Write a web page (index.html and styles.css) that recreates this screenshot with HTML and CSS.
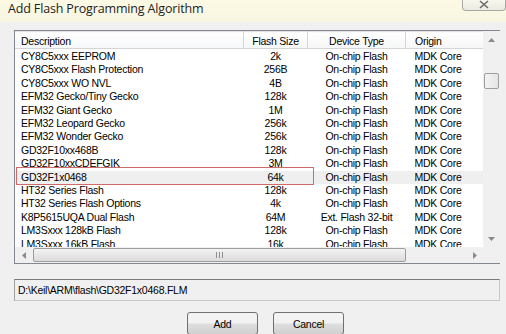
FILE: index.html
```html
<!DOCTYPE html>
<html>
<head>
    <title>Add Flash Programming Algorithm</title>
    <link rel="stylesheet" href="styles.css">
</head>
<body>
    <div class="window">
        <div class="titlebar">
            <span class="title">Add Flash Programming Algorithm</span>
            <div class="close">
                <svg width="12" height="9" viewBox="0 0 12 9"><path d="M2 1 L10 8 M10 1 L2 8" stroke="#6b6b6b" stroke-width="1.6" fill="none"/></svg>
            </div>
        </div>
        <div class="body">
            <div class="listbox">
                <div class="list-area">
                    <table class="algos">
                        <thead>
                            <tr>
                                <th class="c-desc">Description</th>
                                <th class="c-size">Flash Size</th>
                                <th class="c-type">Device Type</th>
                                <th class="c-orig">Origin</th>
                            </tr>
                        </thead>
                        <tbody>
                            <tr><td class="c-desc">CY8C5xxx EEPROM</td><td class="c-size">2k</td><td class="c-type">On-chip Flash</td><td class="c-orig">MDK Core</td></tr>
                            <tr><td class="c-desc">CY8C5xxx Flash Protection</td><td class="c-size">256B</td><td class="c-type">On-chip Flash</td><td class="c-orig">MDK Core</td></tr>
                            <tr><td class="c-desc">CY8C5xxx WO NVL</td><td class="c-size">4B</td><td class="c-type">On-chip Flash</td><td class="c-orig">MDK Core</td></tr>
                            <tr><td class="c-desc">EFM32 Gecko/Tiny Gecko</td><td class="c-size">128k</td><td class="c-type">On-chip Flash</td><td class="c-orig">MDK Core</td></tr>
                            <tr><td class="c-desc">EFM32 Giant Gecko</td><td class="c-size">1M</td><td class="c-type">On-chip Flash</td><td class="c-orig">MDK Core</td></tr>
                            <tr><td class="c-desc">EFM32 Leopard Gecko</td><td class="c-size">256k</td><td class="c-type">On-chip Flash</td><td class="c-orig">MDK Core</td></tr>
                            <tr><td class="c-desc">EFM32 Wonder Gecko</td><td class="c-size">256k</td><td class="c-type">On-chip Flash</td><td class="c-orig">MDK Core</td></tr>
                            <tr><td class="c-desc">GD32F10xx468B</td><td class="c-size">128k</td><td class="c-type">On-chip Flash</td><td class="c-orig">MDK Core</td></tr>
                            <tr><td class="c-desc">GD32F10xxCDEFGIK</td><td class="c-size">3M</td><td class="c-type">On-chip Flash</td><td class="c-orig">MDK Core</td></tr>
                            <tr class="selected"><td class="c-desc">GD32F1x0468</td><td class="c-size">64k</td><td class="c-type">On-chip Flash</td><td class="c-orig">MDK Core</td></tr>
                            <tr><td class="c-desc">HT32 Series Flash</td><td class="c-size">128k</td><td class="c-type">On-chip Flash</td><td class="c-orig">MDK Core</td></tr>
                            <tr><td class="c-desc">HT32 Series Flash Options</td><td class="c-size">4k</td><td class="c-type">On-chip Flash</td><td class="c-orig">MDK Core</td></tr>
                            <tr><td class="c-desc">K8P5615UQA Dual Flash</td><td class="c-size">64M</td><td class="c-type">Ext. Flash 32-bit</td><td class="c-orig">MDK Core</td></tr>
                            <tr><td class="c-desc">LM3Sxxx 128kB Flash</td><td class="c-size">128k</td><td class="c-type">On-chip Flash</td><td class="c-orig">MDK Core</td></tr>
                            <tr><td class="c-desc">LM3Sxxx 16kB Flash</td><td class="c-size">16k</td><td class="c-type">On-chip Flash</td><td class="c-orig">MDK Core</td></tr>
                        </tbody>
                    </table>
                    <!-- red marker drawn over the chosen entry -->
                    <div class="marker"></div>
                </div>
                <div class="vscroll">
                    <div class="sb-btn"><svg width="7" height="4" viewBox="0 0 7 4"><path d="M0 4 L3.5 0 L7 4 Z" fill="#8a8a8a"/></svg></div>
                    <div class="vtrack"><div class="vthumb"></div></div>
                    <div class="sb-btn"><svg width="7" height="4" viewBox="0 0 7 4"><path d="M0 0 L3.5 4 L7 0 Z" fill="#8a8a8a"/></svg></div>
                </div>
                <div class="hscroll">
                    <div class="sb-btn"><svg width="4" height="7" viewBox="0 0 4 7"><path d="M4 0 L0 3.5 L4 7 Z" fill="#8a8a8a"/></svg></div>
                    <div class="htrack">
                        <div class="hthumb">
                            <svg width="7" height="6" viewBox="0 0 7 6"><path d="M0.5 0 V6 M3.5 0 V6 M6.5 0 V6" stroke="#8d8d8d" stroke-width="1"/></svg>
                        </div>
                    </div>
                    <div class="sb-btn"><svg width="4" height="7" viewBox="0 0 4 7"><path d="M0 0 L4 3.5 L0 7 Z" fill="#8a8a8a"/></svg></div>
                </div>
                <div class="corner"></div>
            </div>
            <div class="pathbox">D:\Keil\ARM\flash\GD32F1x0468.FLM</div>
            <div class="buttons">
                <button class="btn">Add</button>
                <button class="btn">Cancel</button>
            </div>
        </div>
    </div>
</body>
</html>
```

FILE: styles.css
```css
body {
    margin: 0;
    background-color: #f0f0f0;
    font-family: "Liberation Sans", Arial, sans-serif;
    font-size: 10.5px;
    letter-spacing: -0.25px;
    color: #000;
}
.window {
    width: 506px;
    height: 334px;
    overflow: hidden;
    background-color: #f0f0f0;
}
.titlebar {
    position: relative;
    height: 22px;
    background: linear-gradient(#fcfae4, #f8f6e2);
}
.title {
    display: block;
    padding: 0 0 0 8px;
    font-family: "Open Sans", "Noto Sans", sans-serif;
    font-size: 12.5px;
    letter-spacing: -0.15px;
    line-height: 17px;
    color: #1e1e1e;
}
.close {
    position: absolute;
    top: -1px;
    left: 462px;
    width: 42px;
    height: 11px;
    border: 1px solid #a9a9a4;
    border-top: none;
    border-radius: 0 0 4px 4px;
    background: linear-gradient(#f9f8ee, #ecebe1);
    display: flex;
    justify-content: center;
    align-items: center;
}
.body {
    padding: 8px 6px 0 14px;
}
.listbox {
    display: grid;
    grid-template-columns: 468px 17px;
    grid-template-rows: 216px 16px;
    border: 1px solid #828790;
    background-color: #fff;
}
.list-area {
    position: relative;
    overflow: hidden;
}
.algos {
    border-collapse: collapse;
    table-layout: fixed;
    width: 468px;
}
.algos th {
    height: 15px;
    padding: 1px 0 0;
    font-weight: normal;
    text-align: center;
    background: linear-gradient(#ffffff, #f6f7f8);
    border-top: 1px solid #e3e3e3;
    border-bottom: 1px solid #d5d5d5;
    border-right: 1px solid #d5d5d5;
}
.algos th.c-desc {
    text-align: left;
    padding-left: 5px;
}
.algos th.c-orig {
    text-align: left;
    padding-left: 8px;
}
.algos td {
    height: 13.4px;
    padding: 0;
    line-height: 13.4px;
    white-space: nowrap;
    overflow: hidden;
}
.algos tbody tr:first-child td {
    padding-top: 1px;
}
.c-desc {
    width: 222px;
    padding-left: 6px !important;
}
.c-size {
    width: 63px;
    text-align: center;
}
.c-type {
    width: 97px;
    text-align: center;
}
.c-orig {
    width: 86px;
    padding-left: 9px !important;
}
.selected td {
    background-color: #efefef;
}
.marker {
    position: absolute;
    left: 1px;
    top: 136px;
    width: 296px;
    height: 16px;
    border: 1px solid #cf6a6a;
}
.vscroll {
    grid-row: 1;
    grid-column: 2;
    display: flex;
    flex-direction: column;
    background-color: #f0f0f0;
}
.sb-btn {
    flex: 0 0 17px;
    display: flex;
    justify-content: center;
    align-items: center;
}
.vtrack {
    flex: 1;
    padding: 25px 1px 0;
}
.vthumb {
    height: 14px;
    border: 1px solid #9d9d9d;
    border-radius: 2px;
    background: linear-gradient(90deg, #f3f3f3, #e6e6e6);
}
.hscroll {
    grid-row: 2;
    grid-column: 1;
    display: flex;
    background-color: #f0f0f0;
}
.htrack {
    flex: 1;
    padding: 1px 60px 1px 1px;
    display: flex;
}
.hthumb {
    flex: 1;
    border: 1px solid #9d9d9d;
    border-radius: 2px;
    background: linear-gradient(#f3f3f3, #dcdcdc);
    display: flex;
    justify-content: center;
    align-items: center;
}
.corner {
    grid-row: 2;
    grid-column: 2;
    background-color: #f0f0f0;
}
.pathbox {
    margin-top: 15px;
    height: 20px;
    padding-left: 3px;
    line-height: 20px;
    border: 1px solid #c8c8c8;
    border-top-color: #7a7a7a;
    border-left-color: #a0a0a0;
    background-color: #f0f0f0;
}
.buttons {
    display: flex;
    gap: 15px;
    margin-top: 11px;
    padding-left: 173px;
}
.btn {
    width: 71px;
    height: 23px;
    padding: 0;
    font-family: "Liberation Sans", Arial, sans-serif;
    font-size: 10.5px;
    letter-spacing: -0.25px;
    color: #000;
    border: 1px solid #707070;
    border-radius: 3px;
    background: linear-gradient(#f2f2f2 45%, #dddddd 55%, #d0d0d0);
}
```
